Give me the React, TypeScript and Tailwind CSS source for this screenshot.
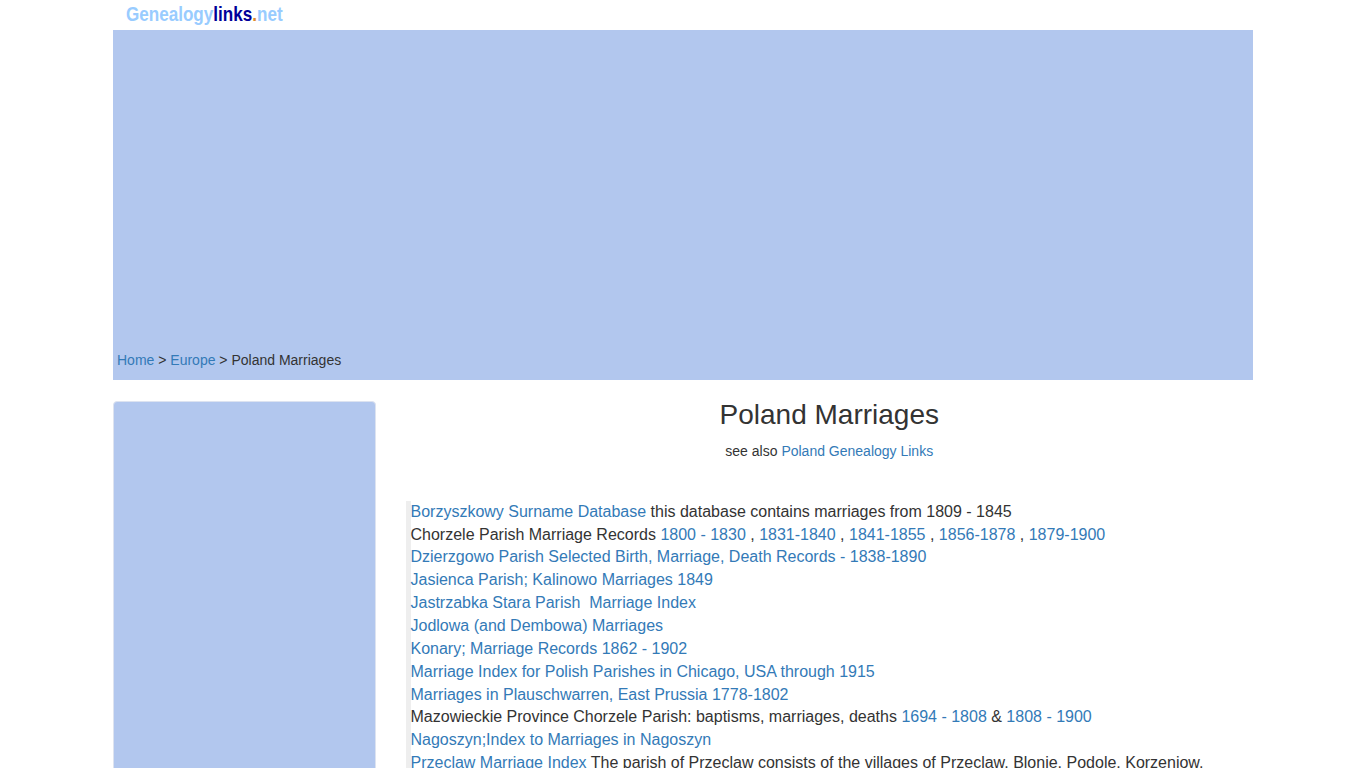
const linkClass = "text-[#337ab7]";

function L({ children }: { children: React.ReactNode }) {
  return <a href="#" className={linkClass}>{children}</a>;
}

export default function App() {
  return (
    <div className="h-[768px] overflow-hidden bg-white font-['Liberation_Sans',Arial,sans-serif] text-[14px] leading-[20px] text-[#333333]">
      <div className="mx-auto w-[1140px]">
        {/* Logo */}
        <div className="h-[30px] pl-[13px] pt-[3px] text-[21px] font-bold leading-[22px] text-[#99ccff]">
          <span className="inline-block origin-left scale-x-[0.813] whitespace-nowrap">
            Genealogy<span className="text-[#000099]">links</span>
            <span className="text-[#e08a2c]">.</span>net
          </span>
        </div>

        {/* Banner */}
        <div className="flex h-[350px] items-end bg-[#b2c7ee] pb-[10px] pl-[4px]">
          <div>
            <L>Home</L> &gt; <L>Europe</L> &gt; Poland Marriages
          </div>
        </div>

        <div className="mt-[20px] flex">
          {/* Sidebar */}
          <div className="mt-[1px] h-[500px] w-[262.5px] shrink-0 rounded-[4px] border border-[#dde3f0] bg-[#b2c7ee]" />

          {/* Main */}
          <div className="ml-[30px] flex-1">
            <h1 className="mt-0 text-center text-[28px] font-normal leading-[30px]">Poland Marriages</h1>
            <p className="mt-[11px] text-center">
              see also <L>Poland Genealogy Links</L>
            </p>
            <div className="mt-[39.7px] border-l-[5px] border-[#eeeeee] text-[16px] leading-[22.857px]">
              <div><L>Borzyszkowy Surname Database</L> this database contains marriages from 1809 - 1845</div>
              <div>
                Chorzele Parish Marriage Records <L>1800 - 1830</L> , <L>1831-1840</L> , <L>1841-1855</L> , <L>1856-1878</L> , <L>1879-1900</L>
              </div>
              <div><L>Dzierzgowo Parish Selected Birth, Marriage, Death Records - 1838-1890</L></div>
              <div><L>Jasienca Parish; Kalinowo Marriages 1849</L></div>
              <div className="whitespace-pre"><L>Jastrzabka Stara Parish  Marriage Index</L></div>
              <div><L>Jodlowa (and Dembowa) Marriages</L></div>
              <div><L>Konary; Marriage Records 1862 - 1902</L></div>
              <div><L>Marriage Index for Polish Parishes in Chicago, USA through 1915</L></div>
              <div><L>Marriages in Plauschwarren, East Prussia 1778-1802</L></div>
              <div>
                Mazowieckie Province Chorzele Parish: baptisms, marriages, deaths <L>1694 - 1808</L> &amp; <L>1808 - 1900</L>
              </div>
              <div><L>Nagoszyn;Index to Marriages in Nagoszyn</L></div>
              <div>
                <L>Przeclaw Marriage Index</L> The parish of Przeclaw consists of the villages of Przeclaw, Blonie, Podole, Korzeniow,
              </div>
            </div>
          </div>
        </div>
      </div>
    </div>
  );
}
